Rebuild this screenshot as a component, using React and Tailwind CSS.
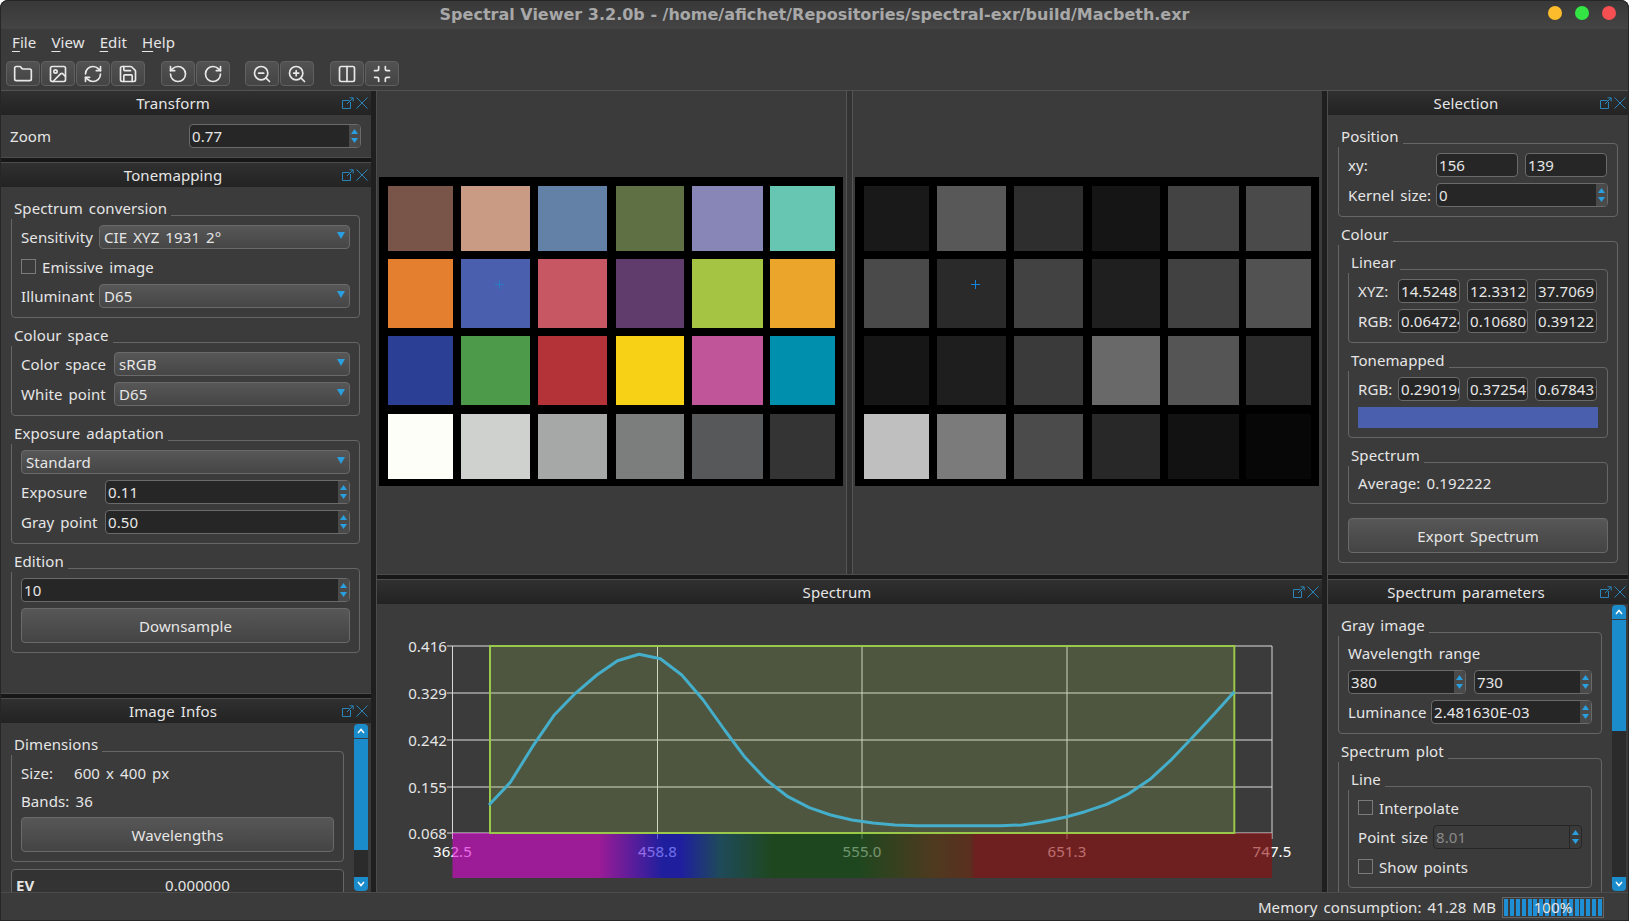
import { Folder, Image, RefreshCw, Save, RotateCcw, RotateCw, ZoomOut, ZoomIn, Columns2, Minimize } from "lucide-react";

const TOOLBAR = [
  { className: "", icons: [Folder, Image, RefreshCw, Save] },
  { className: "ml-[16px]", icons: [RotateCcw, RotateCw] },
  { className: "ml-[15px]", icons: [ZoomOut, ZoomIn] },
  { className: "ml-[16px]", icons: [Columns2, Minimize] },
];

const SWATCH_X = [9, 82, 159, 237, 313, 391];
const SWATCH_W = [65, 69, 69, 68, 71, 65];
const SWATCH_Y = [9, 82, 159, 237];
const SWATCH_H = [65, 69, 69, 65];

const COLOR_CHART = [
  ["#785548", "#c99a84", "#6381a6", "#5f7045", "#8886b6", "#67c6b1"],
  ["#e47f30", "#4a5fad", "#c65763", "#603c6d", "#a6c444", "#eba52a"],
  ["#2b4095", "#4c9a4a", "#b33339", "#f6d116", "#c05599", "#0090ae"],
  ["#fdfef8", "#cfd1ce", "#a6a8a7", "#7c7e7d", "#575859", "#343434"],
];

const GRAY_CHART = [
  ["#191919", "#585858", "#2e2e2e", "#151515", "#434343", "#4a4a4a"],
  ["#4a4a4a", "#2a2a2a", "#424242", "#1f1f1f", "#414141", "#525252"],
  ["#161616", "#1e1e1e", "#3a3a3a", "#696969", "#555555", "#2b2b2b"],
  ["#bfbfbf", "#7b7b7b", "#4b4b4b", "#282828", "#121212", "#070707"],
];

const CURVE =
  "489,805 510.4,782.3 532.5,746.7 554,715.3 575.4,693.3 596.8,675 617.5,660.7 639,654.3 660.4,658.7 681.8,675 703.2,700 724.6,730 745,757.3 766.4,780 787.9,796.7 809.3,807.7 830.7,815 852,820 873,823 895,825 916.7,825.7 938,825.7 960,825.7 980,825.7 1000,825.7 1021.7,825 1043,821.7 1065,817.3 1085,811.7 1106.7,804.3 1128.3,794 1150,779.3 1171.7,759.3 1191.7,738.3 1213.3,715 1234.3,691.7";

// strip is drawn at 60% over the axis labels, so these are brighter than what shows
const STRIP_STOPS = [
  [0, "rgb(220,7,211)"],
  [0.178, "rgb(220,7,211)"],
  [0.257, "rgb(12,12,224)"],
  [0.279, "rgb(12,12,224)"],
  [0.326, "rgb(12,84,111)"],
  [0.391, "rgb(12,79,12)"],
  [0.496, "rgb(12,79,12)"],
  [0.587, "rgb(92,57,12)"],
  [0.632, "rgb(111,39,12)"],
  [0.638, "rgb(144,12,12)"],
  [1, "rgb(144,12,12)"],
];

function DockHeader({ title }) {
  return (
    <div className="flex h-[24px] shrink-0 items-center bg-gradient-to-b from-[#303030] to-[#232323] pr-[3px]">
      <div className="flex-1 pl-[4px] text-center">{title}</div>
      <div className="flex shrink-0 items-center gap-[2px]">
        <svg width="12" height="12" viewBox="0 0 12 12" fill="none" stroke="#2a84b8" strokeWidth="1">
          <path d="M7.5 3.5H.5v8h8V5" />
          <path d="M5 7l6-6M7.5.8h3.7v3.7" />
        </svg>
        <svg width="12" height="12" viewBox="0 0 12 12" fill="none" stroke="#2a84b8" strokeWidth="1">
          <path d="M.5.5l11 11M11.5.5l-11 11" />
        </svg>
      </div>
    </div>
  );
}

function Group({ title, className = "", children }) {
  return (
    <div className={`relative rounded-[4px] border border-[#666666] px-[9px] py-[9px] ${className}`}>
      <div className="absolute left-[-2px] top-[-18px] h-[21px] bg-[#3b3b3b] pl-[4px] pr-[4px] leading-[20px]">
        {title}
      </div>
      {children}
    </div>
  );
}

function Combo({ value, className = "" }) {
  return (
    <div className={`flex h-[24px] items-center justify-between rounded-[4px] border border-[#6a6a6a] bg-gradient-to-b from-[#575757] to-[#464646] pl-[4px] pr-[4px] ${className}`}>
      <span>{value}</span>
      <svg width="8" height="7" viewBox="0 0 8 7" className="mb-[3px]">
        <path d="M0 0h8L4 7z" fill="#2a9fe0" />
      </svg>
    </div>
  );
}

function Spin({ value, className = "", disabled = false }) {
  return (
    <div className={`flex h-[24px] overflow-hidden rounded-[4px] border ${disabled ? "border-[#262626] bg-[#3b3b3b] text-[#8a8a8a]" : "border-[#6a6a6a] bg-[#262626]"} ${className}`}>
      <span className="flex-1 overflow-hidden whitespace-nowrap pl-[2px] leading-[23px]">{value}</span>
      <div className={`flex w-[12px] shrink-0 flex-col items-center justify-center gap-[4px] border-l ${disabled ? "border-[#262626]" : "border-[#262626] bg-[#4a4a4a]"}`}>
        <svg width="7" height="5" viewBox="0 0 7 5">
          <path d="M0 5h7L3.500 0z" fill="#2a9fe0" />
        </svg>
        <svg width="7" height="5" viewBox="0 0 7 5">
          <path d="M0 0h7L3.500 5z" fill="#2a9fe0" />
        </svg>
      </div>
    </div>
  );
}

function Field({ value, className = "" }) {
  return (
    <div className={`h-[24px] overflow-hidden whitespace-nowrap rounded-[4px] border border-[#6a6a6a] bg-[#262626] pl-[2px] leading-[22px] ${className}`}>
      {value}
    </div>
  );
}

function Button({ label, className = "" }) {
  return (
    <div className={`flex h-[35px] items-center justify-center rounded-[4px] border border-[#6a6a6a] bg-gradient-to-b from-[#575757] to-[#444444] pt-[2px] ${className}`}>
      {label}
    </div>
  );
}

function Check({ label }) {
  return (
    <div className="flex h-[23px] items-center gap-[6px]">
      <div className="h-[15px] w-[15px] border border-[#7a7a7a]" />
      <span className="mt-[2px]">{label}</span>
    </div>
  );
}

function Scrollbar({ className = "" }) {
  return (
    <div className={`flex w-[14px] shrink-0 flex-col ${className}`}>
      <div className="flex h-[14px] items-center justify-center rounded-t-[4px] bg-[#1a8bcb]">
        <svg width="8" height="6" viewBox="0 0 8 6" fill="none" stroke="#ffffff" strokeWidth="1.5">
          <path d="M1 5l3-3.5L7 5" />
        </svg>
      </div>
      <div className="mt-[1px] h-[111px] bg-[#1a8bcb]" />
      <div className="flex-1 bg-[#2b2b2b]" />
      <div className="flex h-[14px] items-center justify-center rounded-b-[4px] bg-[#1a8bcb]">
        <svg width="8" height="6" viewBox="0 0 8 6" fill="none" stroke="#ffffff" strokeWidth="1.5">
          <path d="M1 1l3 3.5L7 1" />
        </svg>
      </div>
    </div>
  );
}

function HSplit() {
  return <div className="h-[6px] shrink-0 border-y border-[#4c4c4c] bg-[#171717]" />;
}

function VSplit() {
  return <div className="w-[6px] shrink-0 border-r border-[#4c4c4c] bg-[#1f1f1f]" />;
}

function Chart({ rows, cross }) {
  return (
    <svg width="464" height="309" className="block">
      <rect width="464" height="309" fill="#000000" />
      {rows.map((row, r) =>
        row.map((c, i) => (
          <rect key={`${r}-${i}`} x={SWATCH_X[i]} y={SWATCH_Y[r]} width={SWATCH_W[i]} height={SWATCH_H[r]} fill={c} />
        ))
      )}
      <path d="M120.500 103v9M116 107.500h9" stroke={cross} strokeWidth="1" fill="none" />
    </svg>
  );
}

function SpectrumPlot() {
  const hLines = [646, 693, 740, 787, 833];
  const vLines = [452.5, 657.5, 862, 1067, 1272];
  const yLabels = [
    ["0.416", 652],
    ["0.329", 699],
    ["0.242", 746],
    ["0.155", 793],
    ["0.068", 839],
  ];
  const xLabels = [
    ["362.5", 452.5],
    ["458.8", 657.5],
    ["555.0", 862],
    ["651.3", 1067],
    ["747.5", 1272],
  ];
  return (
    <svg viewBox="377 604 945 288" width="945" height="288" className="block shrink-0" fontFamily="Noto Sans, sans-serif" fontSize="15">
      <defs>
        <linearGradient id="strip">
          {STRIP_STOPS.map(([o, c]) => (
            <stop key={o} offset={o} stopColor={c} />
          ))}
        </linearGradient>
      </defs>
      {hLines.map((y) => (
        <line key={y} x1="447" x2="1272" y1={y} y2={y} stroke="#a8a8a8" strokeWidth="1.5" />
      ))}
      {vLines.map((x) => (
        <line key={x} x1={x} x2={x} y1="646" y2="839" stroke="#d8d8d8" strokeWidth="1" />
      ))}
      {yLabels.map(([t, y]) => (
        <text key={t} x="447" y={y} textAnchor="end" fill="#e6e6e6">
          {t}
        </text>
      ))}
      {xLabels.map(([t, x]) => (
        <text key={t} x={x} y="857" textAnchor="middle" fill="#ffffff">
          {t}
        </text>
      ))}
      <rect x="452.5" y="833" width="819.5" height="45" fill="url(#strip)" opacity="0.6" />
      <rect x="490" y="646" width="744.3" height="187" fill="#a6d357" fillOpacity="0.18" stroke="#9ac84a" strokeWidth="2" />
      <polyline points={CURVE} fill="none" stroke="#45aecb" strokeWidth="3" strokeLinejoin="round" />
    </svg>
  );
}

export default function App() {
  return (
    <div className="relative flex h-[921px] w-[1629px] flex-col overflow-hidden rounded-t-[8px] bg-[#3b3b3b] font-['Noto_Sans',sans-serif] text-[15px] tracking-[0.1px] text-[#e6e6e6] [word-spacing:2px]">
      {/* Title bar */}
      <div className="relative flex h-[29px] shrink-0 items-center justify-center bg-gradient-to-b from-[#383838] to-[#444444] pt-[1px] font-['DejaVu_Sans',sans-serif] text-[16px] font-bold tracking-normal text-[#a8a8a8] [word-spacing:0px]">
        Spectral Viewer 3.2.0b - /home/afichet/Repositories/spectral-exr/build/Macbeth.exr
        <div className="absolute right-[13px] top-[6px] flex gap-[13px]">
          <div className="h-[14px] w-[14px] rounded-full bg-[#fdbc2c]" />
          <div className="h-[14px] w-[14px] rounded-full bg-[#33e444]" />
          <div className="h-[14px] w-[14px] rounded-full bg-[#f64f52]" />
        </div>
      </div>

      {/* Menu */}
      <div className="flex h-[31px] shrink-0 items-center gap-[15px] pb-[5px] pl-[12px]">
        <span><u className="underline-offset-[3px]">F</u>ile</span>
        <span><u className="underline-offset-[3px]">V</u>iew</span>
        <span><u className="underline-offset-[3px]">E</u>dit</span>
        <span><u className="underline-offset-[3px]">H</u>elp</span>
      </div>

      {/* Toolbar */}
      <div className="flex h-[31px] shrink-0 items-start border-b border-[#525252] pl-[6px] pt-[1px]">
        {TOOLBAR.map((group, g) => (
          <div key={g} className={`flex gap-px ${group.className}`}>
            {group.icons.map((Icon, i) => (
              <div key={i} className="flex h-[25px] w-[34px] items-center justify-center rounded-[4px] border border-[#606060] bg-gradient-to-b from-[#525252] to-[#444444]">
                <Icon size={20} strokeWidth={2} color="#e8e8e8" />
              </div>
            ))}
          </div>
        ))}
      </div>

      {/* Body */}
      <div className="flex min-h-0 flex-1">
        {/* Left docks */}
        <div className="flex w-[371px] shrink-0 flex-col">
          <div className="h-[66px] shrink-0">
            <DockHeader title="Transform" />
            <div className="flex items-center justify-between pl-[10px] pr-[10px] pt-[9px]">
              <span>Zoom</span>
              <Spin value="0.77" className="w-[172px]" />
            </div>
          </div>
          <HSplit />
          <div className="flex h-[530px] shrink-0 flex-col">
            <DockHeader title="Tonemapping" />
            <div className="flex flex-col gap-[24px] px-[11px] pt-[28px]">
              <Group title="Spectrum conversion">
                <div className="flex flex-col gap-[6px]">
                  <div className="flex items-center justify-between">
                    <span>Sensitivity</span>
                    <Combo value="CIE XYZ 1931 2°" className="w-[251px]" />
                  </div>
                  <Check label="Emissive image" />
                  <div className="flex items-center justify-between">
                    <span>Illuminant</span>
                    <Combo value="D65" className="w-[251px]" />
                  </div>
                </div>
              </Group>
              <Group title="Colour space">
                <div className="flex flex-col gap-[6px]">
                  <div className="flex items-center justify-between">
                    <span>Color space</span>
                    <Combo value="sRGB" className="w-[236px]" />
                  </div>
                  <div className="flex items-center justify-between">
                    <span>White point</span>
                    <Combo value="D65" className="w-[236px]" />
                  </div>
                </div>
              </Group>
              <Group title="Exposure adaptation">
                <div className="flex flex-col gap-[6px]">
                  <Combo value="Standard" />
                  <div className="flex items-center justify-between">
                    <span>Exposure</span>
                    <Spin value="0.11" className="w-[245px]" />
                  </div>
                  <div className="flex items-center justify-between">
                    <span>Gray point</span>
                    <Spin value="0.50" className="w-[245px]" />
                  </div>
                </div>
              </Group>
              <Group title="Edition">
                <div className="flex flex-col gap-[6px]">
                  <Spin value="10" />
                  <Button label="Downsample" />
                </div>
              </Group>
            </div>
          </div>
          <HSplit />
          <div className="flex min-h-0 flex-1 flex-col">
            <DockHeader title="Image Infos" />
            <div className="flex min-h-0 flex-1 pl-[11px] pr-[3px] pt-[1px]">
              <div className="flex min-w-0 flex-1 flex-col gap-[7px] overflow-hidden pt-[27px]">
                <Group title="Dimensions" className="mr-[10px] shrink-0">
                  <div className="flex h-[24px] items-center">
                    <span className="w-[53px]">Size:</span>
                    <span>600 x 400 px</span>
                  </div>
                  <div className="mt-[4px] flex h-[24px] items-center">Bands: 36</div>
                  <Button label="Wavelengths" className="mt-[4px]" />
                </Group>
                <div className="mr-[10px] flex shrink-0 rounded-t-[4px] border border-[#666666] bg-[#333333] pl-[4px] pt-[3px] leading-[24px]">
                  <span className="w-[149px] font-bold">EV</span>
                  <span>0.000000</span>
                </div>
              </div>
              <Scrollbar className="mb-[1px]" />
            </div>
          </div>
        </div>
        <VSplit />

        {/* Central column */}
        <div className="flex w-[945px] shrink-0 flex-col">
          <div className="flex h-[483px] shrink-0">
            <div className="flex flex-1 items-center justify-center pb-[2px] pr-[1px]">
              <Chart rows={COLOR_CHART} cross="#2a7ac4" />
            </div>
            <div className="w-[7px] shrink-0 border-x border-[#555555] bg-[#333333]" />
            <div className="flex flex-1 items-center justify-center pb-[2px] pr-[1px]">
              <Chart rows={GRAY_CHART} cross="#1184e0" />
            </div>
          </div>
          <HSplit />
          <div className="flex min-h-0 flex-1 flex-col">
            <DockHeader title="Spectrum" />
            <SpectrumPlot />
          </div>
        </div>
        <VSplit />

        {/* Right docks */}
        <div className="flex w-[301px] shrink-0 flex-col">
          <div className="flex h-[483px] shrink-0 flex-col">
            <DockHeader title="Selection" />
            <div className="flex flex-col gap-[24px] pl-[10px] pr-[11px] pt-[28px]">
              <Group title="Position">
                <div className="flex h-[24px] items-center">
                  <span className="w-[88px]">xy:</span>
                  <Field value="156" className="w-[82px]" />
                  <Field value="139" className="ml-[7px] w-[82px]" />
                </div>
                <div className="mt-[6px] flex items-center">
                  <span className="w-[88px]">Kernel size:</span>
                  <Spin value="0" className="flex-1" />
                </div>
              </Group>
              <Group title="Colour">
                <div className="flex flex-col gap-[24px] pt-[18px]">
                  <Group title="Linear">
                    <div className="flex items-center gap-[7px]">
                      <span className="w-[33px]">XYZ:</span>
                      <Field value="14.5248" className="w-[62px]" />
                      <Field value="12.3312" className="w-[61px]" />
                      <Field value="37.7069" className="w-[62px]" />
                    </div>
                    <div className="mt-[6px] flex items-center gap-[7px]">
                      <span className="w-[33px]">RGB:</span>
                      <Field value="0.064724" className="w-[62px]" />
                      <Field value="0.106809" className="w-[61px]" />
                      <Field value="0.39122" className="w-[62px]" />
                    </div>
                  </Group>
                  <Group title="Tonemapped">
                    <div className="flex items-center gap-[7px]">
                      <span className="w-[33px]">RGB:</span>
                      <Field value="0.290196" className="w-[62px]" />
                      <Field value="0.372549" className="w-[61px]" />
                      <Field value="0.678431" className="w-[62px]" />
                    </div>
                    <div className="mt-[6px] h-[21px] bg-[#4a5fad]" />
                  </Group>
                  <Group title="Spectrum" className="!py-0">
                    <div className="flex h-[40px] items-center">Average: 0.192222</div>
                  </Group>
                  <Button label="Export Spectrum" className="-mt-[10px]" />
                </div>
              </Group>
            </div>
          </div>
          <HSplit />
          <div className="flex min-h-0 flex-1 flex-col">
            <DockHeader title="Spectrum parameters" />
            <div className="flex min-h-0 flex-1 overflow-hidden pl-[10px] pr-[3px] pt-[1px]">
              <div className="flex min-w-0 flex-1 flex-col gap-[24px] pt-[27px]">
                <Group title="Gray image" className="mr-[10px] shrink-0">
                  <div className="flex h-[22px] items-center">Wavelength range</div>
                  <div className="mt-[6px] flex justify-between">
                    <Spin value="380" className="w-[118px]" />
                    <Spin value="730" className="w-[118px]" />
                  </div>
                  <div className="mt-[6px] flex items-center justify-between">
                    <span>Luminance</span>
                    <Spin value="2.481630E-03" className="w-[161px]" />
                  </div>
                </Group>
                <Group title="Spectrum plot" className="mr-[10px] shrink-0">
                  <div className="pt-[18px]">
                    <Group title="Line">
                      <div className="flex flex-col gap-[6px]">
                        <Check label="Interpolate" />
                        <div className="flex items-center justify-between">
                          <span>Point size</span>
                          <Spin value="8.01" disabled className="w-[149px]" />
                        </div>
                        <Check label="Show points" />
                      </div>
                    </Group>
                  </div>
                </Group>
              </div>
              <Scrollbar className="mb-[1px]" />
            </div>
          </div>
        </div>
      </div>

      {/* Status bar */}
      <div className="flex h-[29px] shrink-0 items-center justify-end gap-[6px] border-t border-[#4c4c4c] pr-[25px]">
        <span>Memory consumption: 41.28 MB</span>
        <div className="relative flex h-[21px] w-[102px] items-stretch justify-between border border-[#666666] px-[1px] py-[1px]">
          {Array.from({ length: 17 }, (_, i) => (
            <div key={i} className="w-[4px] bg-[#1e8fd5]" />
          ))}
          <div className="absolute inset-0 flex items-center justify-center leading-none">100%</div>
        </div>
      </div>

      <div className="pointer-events-none absolute inset-0 rounded-t-[8px] ring-1 ring-inset ring-[#262626]" />
    </div>
  );
}
